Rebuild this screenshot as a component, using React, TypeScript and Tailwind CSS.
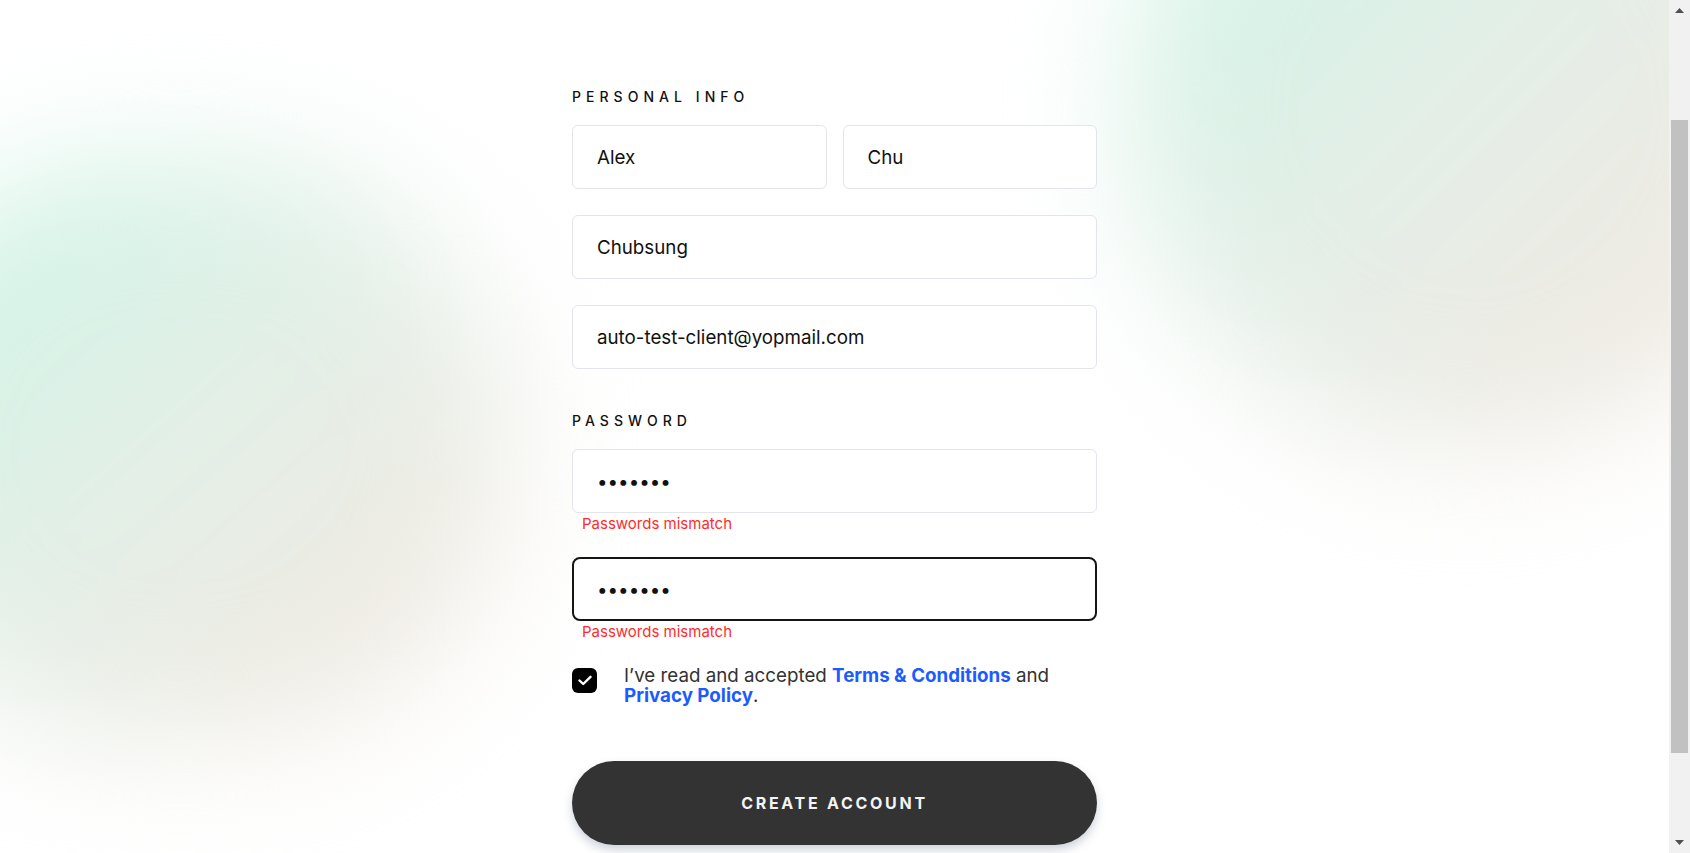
import React from "react";

function Field({ value, type = "text", focused = false }: { value: string; type?: string; focused?: boolean }) {
  return (
    <input
      type={type}
      defaultValue={value}
      autoFocus={focused}
      className={
        focused
          ? "h-[64px] w-full min-w-0 rounded-lg border-2 border-[#151515] bg-white px-[23px] text-[18.75px] text-[#111] caret-black outline-none"
          : "h-[64px] w-full min-w-0 rounded-md border border-[#e4e4ec] bg-white px-[24px] text-[18.75px] text-[#111] outline-none"
      }
    />
  );
}

function ScrollBar() {
  return (
    <div className="flex h-screen w-[21px] shrink-0 flex-col bg-[#f1f1f1]">
      <div className="flex h-[21px] items-center justify-center">
        <svg width="9" height="5" viewBox="0 0 9 5">
          <path d="M0 5 L4.5 0 L9 5Z" fill="#505050" />
        </svg>
      </div>
      <div className="h-[99px]" />
      <div className="mx-[2px] h-[633px] bg-[#c1c1c1]" />
      <div className="flex-1" />
      <div className="flex h-[21px] items-center justify-center">
        <svg width="9" height="5" viewBox="0 0 9 5">
          <path d="M0 0 L4.5 5 L9 0Z" fill="#505050" />
        </svg>
      </div>
    </div>
  );
}

export default function App() {
  return (
    <div className="flex h-screen w-full overflow-hidden bg-white font-[Inter,sans-serif]">
      <div className="relative h-screen flex-1 overflow-hidden">
        {/* soft background blobs */}
        <div className="pointer-events-none absolute left-[-150px] top-[160px] h-[580px] w-[660px] rounded-full bg-linear-to-br from-[#c8f6e6] via-[#e4efe7] to-[#f5e7df] blur-[64px]" />
        <div className="pointer-events-none absolute left-[1130px] top-[-230px] h-[680px] w-[680px] rounded-full bg-linear-to-br from-[#c8f6e6] via-[#e5eee7] to-[#f5e7df] blur-[64px]" />

        <div className="relative mx-auto w-[525px] pt-[87px]">
          <div className="text-[14px] font-medium leading-[20px] tracking-[0.36em] text-[#111]">PERSONAL INFO</div>

          <div className="mt-[18px] flex gap-4">
            <Field value="Alex" />
            <Field value="Chu" />
          </div>
          <div className="mt-[26px]">
            <Field value="Chubsung" />
          </div>
          <div className="mt-[26px]">
            <Field value="auto-test-client@yopmail.com" />
          </div>

          <div className="mt-[42px] text-[14px] font-medium leading-[20px] tracking-[0.36em] text-[#111]">PASSWORD</div>

          <div className="mt-[18px]">
            <Field value="1234567" type="password" />
          </div>
          <p className="mt-[2px] pl-[10px] text-[15px] leading-[18px] text-[#ff2b2b]">Passwords mismatch</p>

          <div className="mt-[24px]">
            <Field value="1234568" type="password" focused />
          </div>
          <p className="mt-[2px] pl-[10px] text-[15px] leading-[18px] text-[#ff2b2b]">Passwords mismatch</p>

          <div className="mt-[25px] flex items-start gap-[27px]">
            <div className="mt-[2px] flex h-[25px] w-[25px] shrink-0 items-center justify-center rounded-md bg-black">
              <svg width="14" height="11" viewBox="0 0 14 11" fill="none">
                <path d="M1.5 5.5 L5.2 9 L12.5 1.8" stroke="white" strokeWidth="2.4" strokeLinecap="round" strokeLinejoin="round" />
              </svg>
            </div>
            <p className="text-[18.75px] leading-[20px] text-[#333]">
              I’ve read and accepted <a href="#" className="font-bold text-[#1c5cff]">Terms &amp; Conditions</a> and{" "}
              <a href="#" className="font-bold text-[#1c5cff]">Privacy Policy</a>.
            </p>
          </div>

          <button className="mt-[55px] h-[84px] w-full rounded-full bg-[#333333] text-[16px] font-bold tracking-[0.17em] text-[#f4f4f4] shadow-[0_5px_10px_rgba(60,80,110,0.25)]">
            CREATE ACCOUNT
          </button>
        </div>
      </div>
      <ScrollBar />
    </div>
  );
}
